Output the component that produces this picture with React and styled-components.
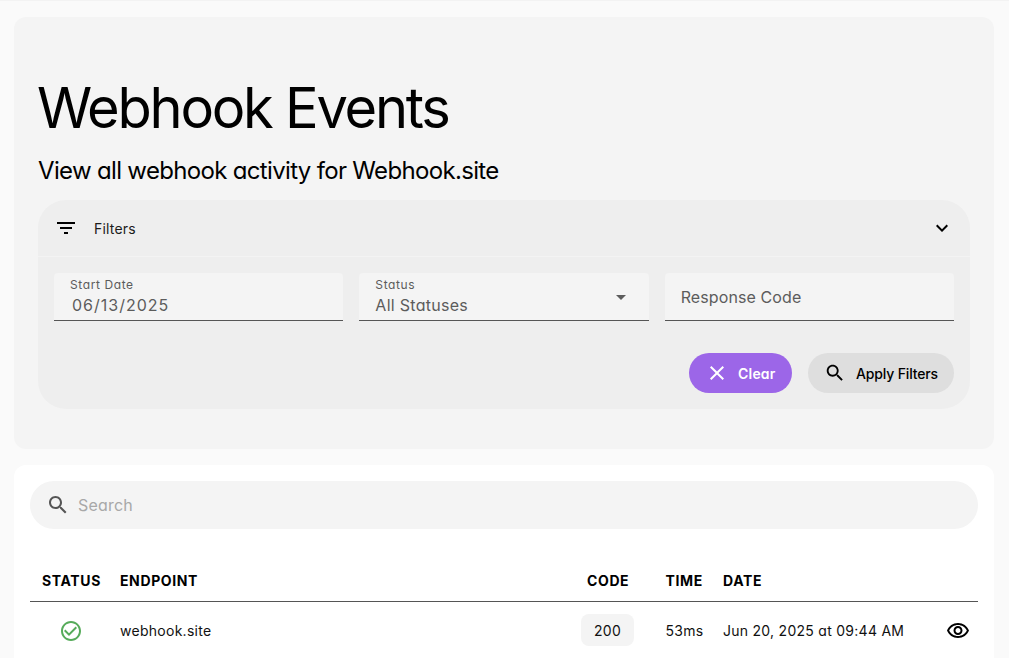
import styled, { createGlobalStyle } from "styled-components";

const GlobalStyle = createGlobalStyle`
  html, body {
    margin: 0;
    background: #fafafa;
  }
  body {
    font-family: "Inter", "Liberation Sans", sans-serif;
    font-feature-settings: "cv11";
    color: #000;
  }
  * {
    box-sizing: border-box;
  }
`;

const FilterIcon = () => (
  <svg width="24" height="24" viewBox="0 0 24 24" fill="currentColor">
    <path d="M10 18h4v-2h-4v2zM3 6v2h18V6H3zm3 7h12v-2H6v2z" />
  </svg>
);

const ChevronIcon = () => (
  <svg width="24" height="24" viewBox="0 0 24 24" fill="currentColor">
    <path d="M7.41 8.59 12 13.17l4.59-4.58L18 10l-6 6-6-6z" />
  </svg>
);

const SearchIcon = ({ size = 24 }) => (
  <svg width={size} height={size} viewBox="0 0 24 24" fill="currentColor">
    <path d="M15.5 14h-.79l-.28-.27C15.41 12.59 16 11.11 16 9.5 16 5.91 13.09 3 9.5 3S3 5.91 3 9.5 5.91 16 9.5 16c1.61 0 3.09-.59 4.23-1.57l.27.28v.79l5 4.99L20.49 19l-4.99-5zm-6 0C7.01 14 5 11.99 5 9.5S7.01 5 9.5 5 14 7.01 14 9.5 11.99 14 9.5 14z" />
  </svg>
);

const CloseIcon = () => (
  <svg width="24" height="24" viewBox="0 0 24 24" fill="currentColor">
    <path d="M19 6.41 17.59 5 12 10.59 6.41 5 5 6.41 10.59 12 5 17.59 6.41 19 12 13.41 17.59 19 19 17.59 13.41 12z" />
  </svg>
);

const CheckCircleIcon = () => (
  <svg width="24" height="24" viewBox="0 0 24 24" fill="currentColor">
    <path d="M16.59 7.58 10 14.17l-3.59-3.58L5 12l5 5 8-8zM12 2C6.48 2 2 6.48 2 12s4.48 10 10 10 10-4.48 10-10S17.52 2 12 2zm0 18c-4.42 0-8-3.58-8-8s3.58-8 8-8 8 3.58 8 8-3.58 8-8 8z" />
  </svg>
);

const EyeIcon = () => (
  <svg width="24" height="24" viewBox="0 0 24 24" fill="currentColor">
    <path d="M12 6c3.79 0 7.17 2.13 8.82 5.5C19.17 14.87 15.79 17 12 17s-7.17-2.13-8.82-5.5C4.83 8.13 8.21 6 12 6m0-2C7 4 2.73 7.11 1 11.5 2.73 15.89 7 19 12 19s9.27-3.11 11-7.5C21.27 7.11 17 4 12 4zm0 5c1.38 0 2.5 1.12 2.5 2.5S13.38 14 12 14s-2.5-1.12-2.5-2.5S10.62 9 12 9m0-2c-2.48 0-4.5 2.02-4.5 4.5S9.52 16 12 16s4.5-2.02 4.5-4.5S14.48 7 12 7z" />
  </svg>
);

const App = () => {
  return (
    <>
      <GlobalStyle />
      <Page>
        <HeroPanel>
          <Title>Webhook Events</Title>
          <Subtitle>View all webhook activity for Webhook.site</Subtitle>
          <FilterCard>
            <FilterHeader>
              <FilterIcon />
              <FilterLabel>Filters</FilterLabel>
              <ChevronIcon />
            </FilterHeader>
            <FilterBody>
              <FieldGrid>
                <Field>
                  <FieldLabel>Start Date</FieldLabel>
                  <DateValue>06/13/2025</DateValue>
                </Field>
                <Field>
                  <FieldLabel>Status</FieldLabel>
                  <FieldValue>All Statuses</FieldValue>
                  <SelectArrow />
                </Field>
                <Field>
                  <FieldPlaceholder>Response Code</FieldPlaceholder>
                </Field>
              </FieldGrid>
              <Actions>
                <ClearButton>
                  <CloseIcon />
                  Clear
                </ClearButton>
                <ApplyButton>
                  <SearchIcon />
                  Apply Filters
                </ApplyButton>
              </Actions>
            </FilterBody>
          </FilterCard>
        </HeroPanel>
        <TablePanel>
          <SearchBar>
            <SearchGlyph>
              <SearchIcon />
            </SearchGlyph>
            <SearchText>Search</SearchText>
          </SearchBar>
          <TableHead>
            <HeadCell>Status</HeadCell>
            <HeadCell>Endpoint</HeadCell>
            <HeadCell $inset>Code</HeadCell>
            <HeadCell>Time</HeadCell>
            <HeadCell>Date</HeadCell>
            <span />
          </TableHead>
          <TableRow>
            <StatusCell>
              <CheckCircleIcon />
            </StatusCell>
            <Cell>webhook.site</Cell>
            <Cell>
              <CodeChip>200</CodeChip>
            </Cell>
            <Cell>53ms</Cell>
            <Cell>Jun 20, 2025 at 09:44 AM</Cell>
            <ActionCell>
              <EyeIcon />
            </ActionCell>
          </TableRow>
        </TablePanel>
      </Page>
    </>
  );
};

export default App;

const Page = styled.div`
  height: 658px;
  overflow: hidden;
  padding: 16px 15px 0 14px;
  display: flex;
  flex-direction: column;
  gap: 16px;
  border-top: 1px solid #f3f3f3;
`;

const HeroPanel = styled.section`
  flex: none;
  background: #f4f4f4;
  border-radius: 12px;
  padding: 57px 24px 40px;
  height: 432px;
`;

const Title = styled.h1`
  margin: 0 0 0 -1px;
  font-size: 56px;
  font-weight: 400;
  line-height: 68px;
  letter-spacing: -2.25px;
`;

const Subtitle = styled.p`
  margin: 15px 0 15px;
  font-size: 24px;
  font-weight: 400;
  line-height: 28px;
  letter-spacing: -0.67px;
`;

const FilterCard = styled.div`
  background: #eeeeee;
  border-radius: 28px;
  height: 209px;
`;

const FilterHeader = styled.div`
  height: 57px;
  padding: 0 16px;
  display: flex;
  align-items: center;
  gap: 16px;
  border-bottom: 1px solid #f3f3f3;
  color: #000;
`;

const FilterLabel = styled.span`
  flex: 1;
  font-size: 14px;
  letter-spacing: 0.2px;
  color: #1c1c1c;
`;

const FilterBody = styled.div`
  padding: 16px;
`;

const FieldGrid = styled.div`
  display: grid;
  grid-template-columns: repeat(3, 1fr);
  gap: 16px;
`;

const Field = styled.div`
  position: relative;
  height: 48px;
  padding: 6px 16px 0;
  background: #f4f4f4;
  border-radius: 4px 4px 0 0;
  border-bottom: 1px solid #555;
`;

const FieldLabel = styled.div`
  font-size: 12px;
  line-height: 12px;
  letter-spacing: 0.6px;
  color: #5c5c5c;
`;

const FieldValue = styled.div`
  margin-top: 4px;
  font-size: 16px;
  line-height: 20px;
  letter-spacing: 0.28px;
  color: #5c5c5c;
`;

const DateValue = styled(FieldValue)`
  margin-left: 2px;
  letter-spacing: 1px;
`;

const FieldPlaceholder = styled(FieldValue)`
  margin-top: 8px;
  letter-spacing: 0.1px;
`;

const SelectArrow = styled.span`
  position: absolute;
  right: 23px;
  top: 22px;
  border-left: 5px solid transparent;
  border-right: 5px solid transparent;
  border-top: 5px solid #5c5c5c;
`;

const Actions = styled.div`
  margin-top: 32px;
  display: flex;
  justify-content: flex-end;
  gap: 16px;
`;

const PillButton = styled.button`
  height: 40px;
  border: none;
  border-radius: 20px;
  display: flex;
  align-items: center;
  white-space: nowrap;
  font-family: inherit;
  font-feature-settings: inherit;
  font-size: 14px;
`;

const ClearButton = styled(PillButton)`
  width: 103px;
  padding: 0 16px;
  gap: 9px;
  background: #9c66e8;
  color: #fff;
  font-weight: 600;
  letter-spacing: 0.2px;
`;

const ApplyButton = styled(PillButton)`
  width: 146px;
  padding: 0 16px;
  gap: 10px;
  background: #dedede;
  color: #000;
  font-weight: 500;
  letter-spacing: -0.15px;
`;

const TablePanel = styled.section`
  flex: 1;
  background: #fff;
  border-radius: 12px 12px 0 0;
  padding: 16px 16px 0;
`;

const SearchBar = styled.div`
  height: 48px;
  border-radius: 24px;
  background: #f4f4f4;
  padding: 0 16px;
  display: flex;
  align-items: center;
  gap: 8px;
`;

const SearchGlyph = styled.span`
  display: flex;
  color: #555;
`;

const SearchText = styled.span`
  font-size: 16px;
  letter-spacing: 0.2px;
  color: #a8a8a8;
`;

const columns = "78px 461px 84.5px 57.5px 1fr 43px";

const TableHead = styled.div`
  margin-top: 32px;
  height: 41px;
  padding-bottom: 2px;
  display: grid;
  grid-template-columns: ${columns};
  align-items: center;
  border-bottom: 1px solid #555;
`;

const HeadCell = styled.span`
  padding-left: ${(props) => (props.$inset ? "18px" : "12px")};
  font-size: 14px;
  font-weight: 700;
  letter-spacing: 0.62px;
  text-transform: uppercase;
`;

const TableRow = styled.div`
  height: 58px;
  display: grid;
  grid-template-columns: ${columns};
  align-items: center;
`;

const Cell = styled.div`
  padding: 0 0 1px 12px;
  font-size: 14px;
  letter-spacing: 0.27px;
  color: #111;
`;

const StatusCell = styled(Cell)`
  display: flex;
  padding: 0 0 0 29px;
  color: #56ab5a;
`;

const ActionCell = styled(Cell)`
  display: flex;
  padding: 0 0 0 11px;
  color: #000;
`;

const CodeChip = styled.span`
  display: block;
  width: 53px;
  height: 32px;
  margin-top: -1px;
  line-height: 34px;
  text-align: center;
  border-radius: 8px;
  background: #f4f4f4;
`;
